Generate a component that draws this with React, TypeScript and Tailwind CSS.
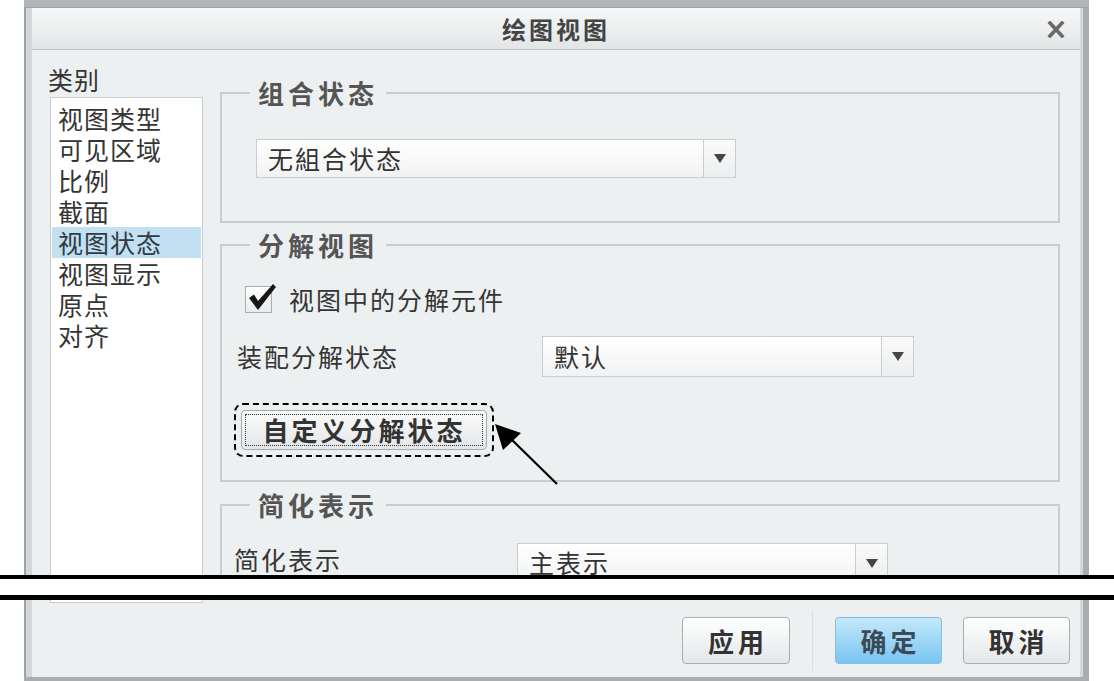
import React from "react";

function Arrow() {
  return (
    <svg width="12" height="9" viewBox="0 0 12 9">
      <path d="M0 0H12L6 9Z" fill="#454545" />
    </svg>
  );
}

function DropBody({ text }: { text: string }) {
  return (
    <>
      <div className="flex-1 flex items-center pl-[11px] text-[25px] leading-none tracking-[2px] text-[#333]">
        {text}
      </div>
      <div className="w-[32px] border-l border-[#c9cdcf] flex items-center justify-center bg-linear-to-b from-[#fafafa] to-[#eceeef]">
        <Arrow />
      </div>
    </>
  );
}

const legendCls =
  "ml-[28px] px-[8px] text-[26px] leading-[26px] font-bold tracking-[4px] text-[#555]";
const fieldCls = "border-2 border-[#c9cdcf] p-0 m-0 min-w-0";

export default function App() {
  const items = ["视图类型", "可见区域", "比例", "截面", "视图状态", "视图显示", "原点", "对齐"];
  return (
    <div className="w-[1114px] h-[681px] bg-white overflow-hidden font-['Noto_Sans_CJK_SC','Noto_Sans',sans-serif] text-[#353535]">
      {/* upper part of dialog */}
      <div className="h-[575px] overflow-hidden relative">
        <div className="ml-[24px] w-[1065px] h-[700px] flex flex-col">
          <div className="h-[8px] bg-[#b2b6b9] border-b border-[#9ea2a5]" />
          <div className="flex flex-1">
            <div className="w-[2px] bg-[#9ea2a5]" />
            <div className="w-[6px] bg-[#d4d7d9]" />
            <div className="flex-1 flex flex-col bg-[#edf0f1]">
              {/* title bar */}
              <div className="h-[42px] flex items-center relative bg-linear-to-b from-[#f7f8f8] to-[#e2e5e6] border-b border-[#bcc0c3]">
                <div className="flex-1 text-center text-[24px] leading-none font-bold tracking-[3px] text-[#444]">
                  绘图视图
                </div>
                <div className="absolute right-[15px] top-[13px]">
                  <svg width="18" height="17" viewBox="0 0 18 17">
                    <path d="M3 2L15 15M15 2L3 15" stroke="#6a6a6a" strokeWidth="3.6" strokeLinecap="square" />
                  </svg>
                </div>
              </div>
              {/* body */}
              <div className="flex pl-[16px]">
                {/* left column */}
                <div className="w-[155px] flex flex-col">
                  <div className="mt-[14px] h-[30px] leading-[30px] text-[25px] tracking-[1px]">类别</div>
                  <div className="mt-[3px] ml-[2px] w-[153px] h-[600px] border border-[#c9cccf] bg-white pt-[5px] px-[1px]">
                    {items.map((t) => (
                      <div
                        key={t}
                        className={
                          "h-[31px] leading-[31px] pl-[6px] text-[25px] tracking-[1px] " +
                          (t === "视图状态" ? "bg-[#c2e0f2] text-[#2f3b45]" : "")
                        }
                      >
                        {t}
                      </div>
                    ))}
                  </div>
                </div>
                {/* right column */}
                <div className="ml-[17px] w-[840px] flex flex-col">
                  {/* group 1 */}
                  <fieldset className={fieldCls + " mt-[30px]"}>
                    <legend className={legendCls}>组合状态</legend>
                    <div className="pl-[34px] pt-[33px] pb-[43px]">
                      <div className="flex w-[480px] h-[39px] border border-[#c9cdcf] bg-linear-to-b from-white to-[#f1f2f3]">
                        <DropBody text="无組合状态" />
                      </div>
                    </div>
                  </fieldset>
                  {/* group 2 */}
                  <fieldset className={fieldCls + " mt-[9px]"}>
                    <legend className={legendCls}>分解视图</legend>
                    <div className="pl-[23px] pt-[26px] pb-[23px] flex flex-col">
                      <div className="h-[30px] flex items-center">
                        <div className="relative w-[27px] h-[27px] border border-[#a9adb0] bg-linear-to-b from-white to-[#e9ebec]">
                          <svg className="absolute left-[1px] top-[-5px]" width="30" height="30" viewBox="0 0 30 30">
                            <path d="M2 16L7 12.5L11 19L26 2L29 5L11 28Z" fill="#161616" />
                          </svg>
                        </div>
                        <div className="ml-[17px] text-[25px] leading-none tracking-[2px]">视图中的分解元件</div>
                      </div>
                      <div className="mt-[22px] h-[41px] flex items-center -ml-[8px]">
                        <div className="w-[305px] text-[25px] leading-none tracking-[2px]">装配分解状态</div>
                        <div className="flex w-[372px] h-[41px] border border-[#c9cdcf] bg-linear-to-b from-white to-[#f1f2f3]">
                          <DropBody text="默认" />
                        </div>
                      </div>
                      <div className="mt-[26px] -ml-[11px] w-[260px] h-[54px] border-2 border-dashed border-black rounded-[9px] p-[5px]">
                        <div className="w-full h-full rounded-[4px] border border-[#a7abae] bg-linear-to-b from-[#fbfbfb] to-[#e3e6e7] p-[3px]">
                          <div className="w-full h-full border border-dotted border-[#333] flex items-center justify-center text-[26px] leading-none font-bold tracking-[3px] text-[#333]">
                            自定义分解状态
                          </div>
                        </div>
                      </div>
                    </div>
                  </fieldset>
                  {/* group 3 */}
                  <fieldset className={fieldCls + " mt-[10px]"}>
                    <legend className={legendCls}>简化表示</legend>
                    <div className="pl-[12px] pt-[25px] pb-[40px]">
                      <div className="h-[40px] flex items-center">
                        <div className="w-[283px] mb-[8px] text-[25px] leading-none tracking-[2px]">简化表示</div>
                        <div className="flex w-[371px] h-[40px] border border-[#c9cdcf] bg-linear-to-b from-white to-[#f1f2f3]">
                          <div className="flex-1 flex items-start pt-[6px] pl-[11px] text-[25px] leading-none tracking-[2px] text-[#333]">
                            主表示
                          </div>
                          <div className="w-[32px] border-l border-[#c9cdcf] flex items-center justify-center bg-linear-to-b from-[#fafafa] to-[#eceeef]">
                            <Arrow />
                          </div>
                        </div>
                      </div>
                    </div>
                  </fieldset>
                </div>
              </div>
            </div>
            <div className="w-[3px] bg-[#d4d7d9]" />
            <div className="w-[6px] bg-[#a9adb0]" />
          </div>
        </div>
        {/* annotation arrow */}
        <svg className="absolute left-0 top-0 pointer-events-none" width="1114" height="575" viewBox="0 0 1114 575">
          <line x1="505" y1="433" x2="557" y2="484" stroke="#000" strokeWidth="2.2" />
          <path d="M495 424L521 433L503 450Z" fill="#000" />
        </svg>
      </div>

      {/* break lines */}
      <div className="h-[4px] bg-black" />
      <div className="h-[16px] bg-white" />
      <div className="h-[5px] bg-black" />

      {/* lower part of dialog */}
      <div className="ml-[24px] w-[1065px] h-[81px] flex flex-col">
        <div className="flex flex-1">
          <div className="w-[2px] bg-[#9ea2a5]" />
          <div className="w-[6px] bg-[#d4d7d9]" />
          <div className="flex-1 flex flex-col bg-[#edf0f1]">
            <div className="ml-[18px] w-[153px] h-[3px] bg-white border-x border-b border-[#c9cccf]" />
            <div className="mt-[14px] flex justify-end pr-[10px]">
              <button className="w-[108px] h-[47px] rounded-[4px] border border-[#a9adb0] bg-linear-to-b from-white to-[#e4e7e8] text-[26px] leading-none font-bold tracking-[4px] text-[#333] pl-[4px]">
                应用
              </button>
              <div className="w-[45px] flex justify-center">
                <div className="w-[1px] h-[60px] -mt-[6px] bg-[#dcdfe1]" />
              </div>
              <button className="w-[107px] h-[47px] rounded-[4px] border border-[#86bde0] bg-linear-to-b from-[#c4e8fb] to-[#76c5f1] text-[26px] leading-none font-bold tracking-[4px] text-[#3a4a57] pl-[4px]">
                确定
              </button>
              <div className="w-[21px]" />
              <button className="w-[107px] h-[47px] rounded-[4px] border border-[#a9adb0] bg-linear-to-b from-white to-[#e4e7e8] text-[26px] leading-none font-bold tracking-[4px] text-[#333] pl-[4px]">
                取消
              </button>
            </div>
            <div className="flex-1" />
          </div>
          <div className="w-[3px] bg-[#d4d7d9]" />
          <div className="w-[6px] bg-[#a9adb0]" />
        </div>
        <div className="h-[4px] bg-[#a9adb0]" />
      </div>
    </div>
  );
}
